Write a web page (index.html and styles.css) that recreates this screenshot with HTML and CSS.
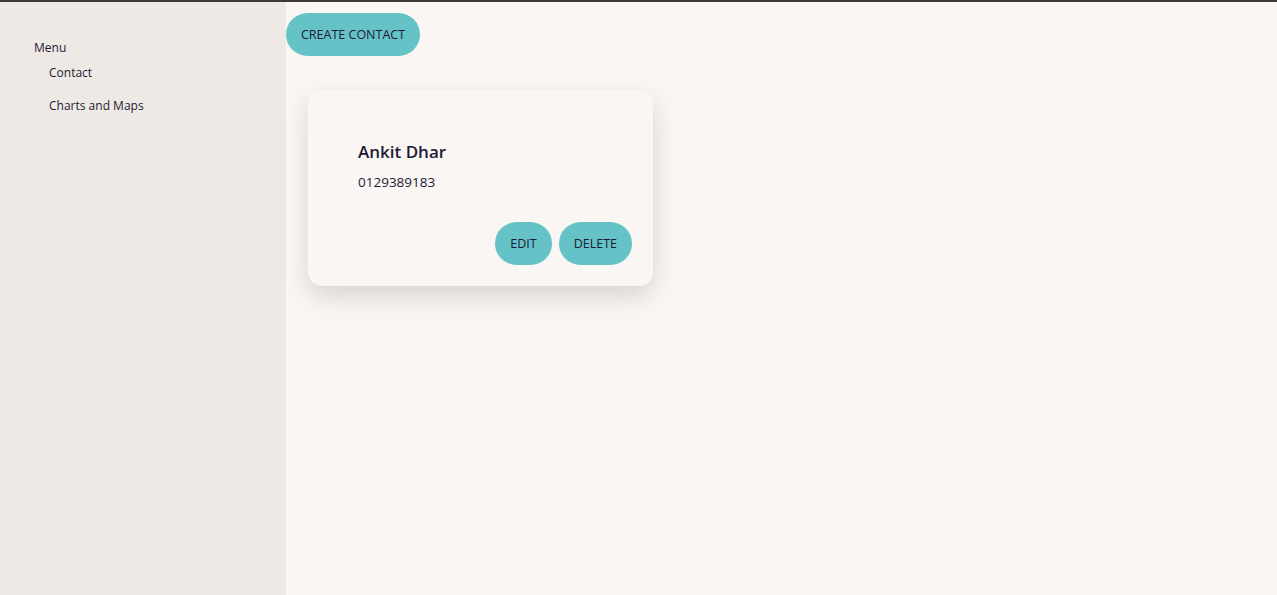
FILE: index.html
```html
<!DOCTYPE html>
<html>
<head>
<meta charset="utf-8">
<link rel="stylesheet" href="styles.css">
</head>
<body>
<div class="app">
  <aside class="sidebar">
    <div class="menu-title">Menu</div>
    <ul class="menu">
      <li>Contact</li>
      <li>Charts and Maps</li>
    </ul>
  </aside>
  <main class="main">
    <div class="toolbar"><button class="btn">CREATE CONTACT</button></div>
    <div class="cards">
      <div class="card">
        <div class="name">Ankit Dhar</div>
        <div class="phone">0129389183</div>
        <div class="actions">
          <button class="btn btn-sm">EDIT</button>
          <button class="btn btn-sm">DELETE</button>
        </div>
      </div>
    </div>
  </main>
</div>
</body>
</html>
```
FILE: styles.css
```css
* { box-sizing: border-box; }
html, body { margin: 0; height: 100%; }
body {
  font-family: "Open Sans", "Noto Sans", sans-serif;
  color: #1f1a33;
  border-top: 2px solid #3a3a3a;
  background: #faf6f4;
}
.app { display: flex; height: 593px; }
.sidebar {
  width: 286px;
  background: #efe9e6;
  padding: 38px 0 0 34px;
  font-size: 12px;
}
.menu-title { line-height: 16px; }
.menu { list-style: none; margin: 0; padding: 0 0 0 15px; }
.menu li { line-height: 16px; margin-top: 9px; }
.menu li + li { margin-top: 17px; }
.main { flex: 1; background: #faf6f4; }
.toolbar { padding-top: 11px; }
.btn {
  background: #65c3c8;
  border: none;
  border-radius: 22px;
  height: 43px;
  padding: 0 15px;
  font-family: inherit;
  font-size: 12.5px;
  color: #1f1a33;
  cursor: pointer;
}
.cards { padding: 34px 0 0 22px; }
.card {
  width: 345px;
  background: #faf6f4;
  border-radius: 14px;
  box-shadow: 0 10px 26px rgba(0,0,0,0.14);
  padding: 50px 21px 21px 50px;
}
.name { font-size: 17px; font-weight: 600; line-height: 24px; }
.phone { font-size: 13.5px; margin-top: 8px; line-height: 20px; }
.actions { display: flex; justify-content: flex-end; gap: 7px; margin-top: 30px; }
.btn-sm { padding: 0 15px; }
```
